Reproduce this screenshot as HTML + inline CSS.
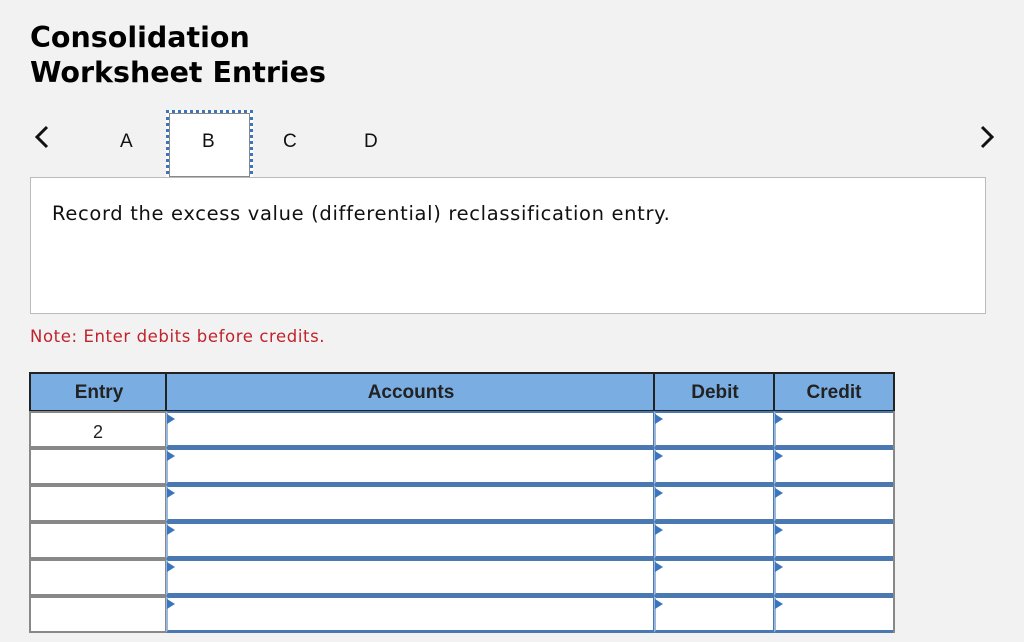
<!DOCTYPE html>
<html><head><style>
body{margin:0;width:1024px;height:642px;background:#f2f2f2;position:relative;overflow:hidden;font-family:"DejaVu Sans","Liberation Sans",sans-serif;}
.a{position:absolute}
h1{position:absolute;left:30px;top:20px;margin:0;font-size:28.5px;line-height:35px;font-weight:bold;color:#000;letter-spacing:0px}
.tab{position:absolute;top:131px;font-family:"Liberation Sans",sans-serif;font-size:19px;color:#111}
.hd{position:absolute;top:372px;height:40px;background:#7aade2;border:2px solid #222;border-right:none;font-family:"Liberation Sans",sans-serif;font-weight:bold;font-size:19px;color:#222;text-align:center;line-height:38px;box-sizing:border-box}
.ec{position:absolute;left:29px;width:138px;height:37px;background:#fff;border:2px solid #888;box-sizing:border-box;font-family:"Liberation Sans",sans-serif;font-size:18px;text-align:center;line-height:38px;color:#222}
.in{position:absolute;height:37px;background:#fff;border:2px solid #4a78b0;border-bottom:3px solid #4a78b0;border-left:2px solid #9ab8dc;box-sizing:border-box}
.in:before{content:"";position:absolute;left:-1px;top:1px;border-left:8px solid #3b75bf;border-top:5px solid transparent;border-bottom:5px solid transparent}
</style></head><body>
<h1>Consolidation<br>Worksheet Entries</h1>
<svg class="a" style="left:33px;top:124px" width="18" height="26"><path d="M14 3 L4 13 L14 23" stroke="#111" stroke-width="3" fill="none"/></svg>
<svg class="a" style="left:978px;top:124px" width="18" height="26"><path d="M4 3 L14 13 L4 23" stroke="#111" stroke-width="3" fill="none"/></svg>
<div class="a" style="left:166px;top:110px;width:87px;height:70px;background:#fff;border:3px dotted #3b75bf;box-sizing:border-box"></div>
<div class="a" style="left:169px;top:113px;width:81px;height:64px;border:1px solid #888;box-sizing:border-box"></div>
<div class="tab" style="left:120px">A</div>
<div class="tab" style="left:202px">B</div>
<div class="tab" style="left:283px">C</div>
<div class="tab" style="left:364px">D</div>
<div class="a" style="left:30px;top:177px;width:956px;height:137px;background:#fff;border:1px solid #bbb;box-sizing:border-box"></div>
<div class="a" style="left:52px;top:202px;font-size:19.5px;letter-spacing:0.66px;color:#111;white-space:nowrap">Record the excess value (differential) reclassification entry.</div>
<div class="a" style="left:30px;top:327px;font-size:16.5px;letter-spacing:0.6px;color:#c0232b;white-space:nowrap">Note: Enter debits before credits.</div>
<div class="hd" style="left:29px;width:138px">Entry</div>
<div class="hd" style="left:165px;width:490px">Accounts</div>
<div class="hd" style="left:653px;width:122px">Debit</div>
<div class="hd" style="left:773px;width:122px;border-right:2px solid #222">Credit</div>
<div class="ec" style="top:411px">2</div>
<div class="ec" style="top:448px"></div>
<div class="ec" style="top:485px"></div>
<div class="ec" style="top:522px"></div>
<div class="ec" style="top:559px"></div>
<div class="ec" style="top:596px"></div>
<div class="in" style="left:166px;top:411px;width:489px"></div><div class="in" style="left:654px;top:411px;width:121px"></div><div class="in" style="left:774px;top:411px;width:121px"></div>
<div class="in" style="left:166px;top:448px;width:489px"></div><div class="in" style="left:654px;top:448px;width:121px"></div><div class="in" style="left:774px;top:448px;width:121px"></div>
<div class="in" style="left:166px;top:485px;width:489px"></div><div class="in" style="left:654px;top:485px;width:121px"></div><div class="in" style="left:774px;top:485px;width:121px"></div>
<div class="in" style="left:166px;top:522px;width:489px"></div><div class="in" style="left:654px;top:522px;width:121px"></div><div class="in" style="left:774px;top:522px;width:121px"></div>
<div class="in" style="left:166px;top:559px;width:489px"></div><div class="in" style="left:654px;top:559px;width:121px"></div><div class="in" style="left:774px;top:559px;width:121px"></div>
<div class="in" style="left:166px;top:596px;width:489px"></div><div class="in" style="left:654px;top:596px;width:121px"></div><div class="in" style="left:774px;top:596px;width:121px"></div>
<div class="a" style="left:893px;top:411px;width:2px;height:222px;background:#888"></div>
</body></html>
